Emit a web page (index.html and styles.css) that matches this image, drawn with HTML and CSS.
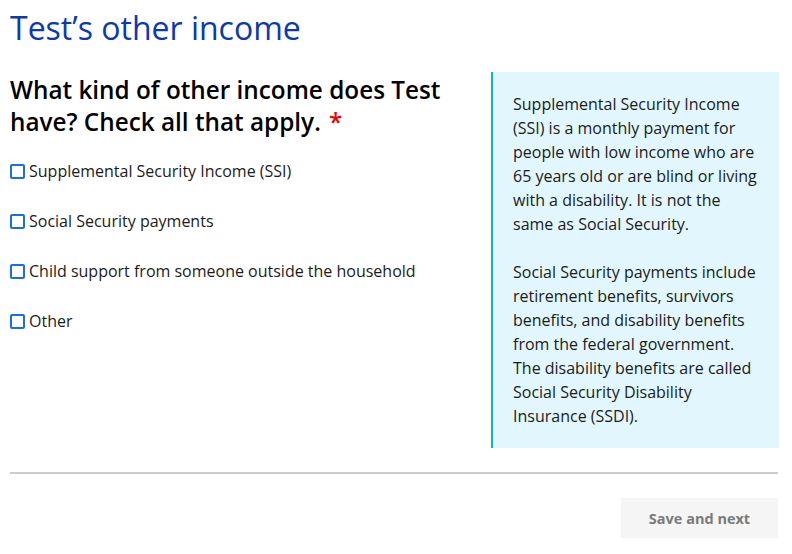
FILE: index.html
```html
<!DOCTYPE html>
<html lang="en">
<head>
<meta charset="utf-8">
<link rel="stylesheet" href="styles.css">
</head>
<body>
<main class="page">
  <h1 class="title">Test’s other income</h1>
  <div class="columns">
    <fieldset class="question">
      <legend class="legend">What kind of other income does Test have? Check all that apply. <span class="req">*</span></legend>
      <div class="options">
        <label class="option"><span class="box"></span>Supplemental Security Income (SSI)</label>
        <label class="option"><span class="box"></span>Social Security payments</label>
        <label class="option"><span class="box"></span>Child support from someone outside the household</label>
        <label class="option"><span class="box"></span>Other</label>
      </div>
    </fieldset>
    <aside class="help">
      <p>Supplemental Security Income (SSI) is a monthly payment for people with low income who are 65 years old or are blind or living with a disability. It is not the same as Social Security.</p>
      <p>Social Security payments include retirement benefits, survivors benefits, and disability benefits from the federal government. The disability benefits are called Social Security Disability Insurance (SSDI).</p>
    </aside>
  </div>
  <hr class="rule">
  <div class="actions">
    <button class="next" type="button">Save and next</button>
  </div>
</main>
</body>
</html>
```
FILE: styles.css
```css
* { box-sizing: border-box; }
html, body { margin: 0; padding: 0; background: #fff; }
body {
  font-family: "Open Sans", "Liberation Sans", sans-serif;
  color: #1b1b1b;
}
.page {
  width: 768px;
  margin-left: 10px;
}
.title {
  font-size: 32px;
  font-weight: 400;
  color: #0b3ab0;
  margin: 0;
  padding-top: 6px;
  line-height: 44px;
}
.columns {
  display: grid;
  grid-template-columns: 481px 288px;
  margin-top: 22px;
}
.question {
  border: 0;
  margin: 0;
  padding: 0;
  min-width: 0;
}
.legend {
  float: left;
  width: 460px;
  padding: 2px 0 0 0;
  font-size: 24.3px;
  font-weight: 600;
  line-height: 32px;
  color: #000;
}
.req { color: #f00000; margin-left: 2px; }
.options {
  clear: both;
  padding-top: 8px;
}
.option {
  display: flex;
  align-items: center;
  font-size: 16px;
  line-height: 24px;
  height: 50px;
  color: #1b1b1b;
}
.box {
  width: 15px;
  height: 15px;
  border: 2px solid #1a6fe0;
  border-radius: 2px;
  margin-right: 4px;
  flex: none;
}
.help {
  background: #e1f7fd;
  border-left: 2px solid #10b3d6;
  padding: 20px;
  font-size: 16px;
  line-height: 24px;
  color: #1b1b1b;
  height: 376px;
}
.help p { margin: 0 0 24px 0; }
.help p:last-child { margin-bottom: 0; }
.rule {
  border: 0;
  height: 2px;
  background: #cccccc;
  margin: 24px 0 0 0;
}
.actions {
  display: flex;
  justify-content: flex-end;
  margin-top: 24px;
}
.next {
  font-family: "Open Sans", "Liberation Sans", sans-serif;
  font-size: 14.5px;
  font-weight: 700;
  color: #7a7a7a;
  background: #f5f5f5;
  border: 0;
  width: 157px;
  height: 40px;
}
```
